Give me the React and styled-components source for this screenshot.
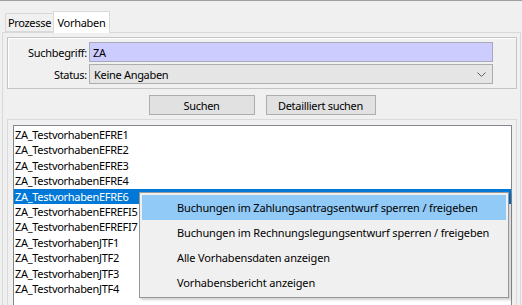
import React from "react";
import styled, { createGlobalStyle } from "styled-components";

const GlobalStyle = createGlobalStyle`
  html, body {
    margin: 0;
    padding: 0;
    background: #f0f0f0;
  }
  body {
    font-family: "Noto Sans", "Liberation Sans", sans-serif;
    font-size: 11px;
    letter-spacing: -0.3px;
    color: #000;
  }
`;

const Window = styled.div`
  position: relative;
  width: 522px;
  height: 305px;
  overflow: hidden;
  box-sizing: border-box;
  border-top: 1px solid #a0a0a0;
  background: #f0f0f0;
`;

const TabStrip = styled.div`
  position: relative;
  z-index: 1;
  display: flex;
  align-items: flex-end;
  height: 31px;
  padding-left: 5px;
`;

const Tab = styled.div`
  box-sizing: border-box;
  display: flex;
  align-items: center;
  justify-content: center;
  width: ${(p) => p.$width}px;
  height: ${(p) => (p.$active ? "22px" : "19px")};
  margin-bottom: ${(p) => (p.$active ? "-1px" : "0")};
  border: 1px solid #d9d9d9;
  border-bottom: ${(p) => (p.$active ? "none" : "1px solid #d9d9d9")};
  border-right: ${(p) => (p.$active ? "1px solid #d9d9d9" : "none")};
  background: ${(p) => (p.$active ? "#fff" : "#f0f0f0")};
`;

const TabPanel = styled.div`
  box-sizing: border-box;
  height: 290px;
  margin: 0 1px 0 2px;
  padding: 4px 3px 0 4px;
  border: 1px solid #d9d9d9;
`;

const GroupBox = styled.div`
  display: flex;
  flex-direction: column;
  gap: 2px;
  padding: 4px 23px 4px 0;
  border: 1px solid #c4c4c4;
  box-shadow: inset 1px 1px 0 #fff;
`;

const FieldRow = styled.div`
  display: flex;
  align-items: center;
  gap: 2px;
`;

const Label = styled.div`
  width: 79px;
  text-align: right;
`;

const TextField = styled.div`
  box-sizing: border-box;
  flex: 1;
  height: 20px;
  padding-left: 3px;
  display: flex;
  align-items: center;
  border: 1px solid #a8a8b8;
  background: #ccccff;
`;

const Combo = styled.div`
  box-sizing: border-box;
  flex: 1;
  height: 20px;
  padding: 0 6px 0 4px;
  display: flex;
  align-items: center;
  justify-content: space-between;
  border: 1px solid #adadad;
  background: #e5e5e5;
`;

const ButtonRow = styled.div`
  display: flex;
  justify-content: center;
  gap: 11px;
  margin: 6px 0 4px;
`;

const Button = styled.div`
  box-sizing: border-box;
  width: ${(p) => p.$width}px;
  height: 20px;
  display: flex;
  align-items: center;
  justify-content: center;
  border: 1px solid #adadad;
  background: #e1e1e1;
`;

const ListFrame = styled.div`
  box-sizing: border-box;
  height: 200px;
  padding: 5px 4px 0 5px;
  border: 1px solid #dadada;
  border-bottom: none;
`;

const ListBox = styled.div`
  box-sizing: border-box;
  height: 100%;
  padding-top: 1px;
  border: 1px solid #828790;
  border-bottom: none;
  background: #fff;
`;

const ListItem = styled.div`
  height: 15.4px;
  line-height: 15.4px;
  padding-left: 1px;
  white-space: nowrap;
  background: ${(p) => (p.$selected ? "#0078d7" : "transparent")};
  color: ${(p) => (p.$selected ? "#fff" : "#000")};
`;

const ContextMenu = styled.div`
  position: absolute;
  left: 139px;
  top: 191px;
  box-sizing: border-box;
  width: 370px;
  padding: 2px;
  border: 1px solid #979797;
  background: #f0f0f0;
  box-shadow: 2px 2px 2px rgba(0, 0, 0, 0.18);
  letter-spacing: -0.15px;
  z-index: 5;
`;

const MenuItem = styled.div`
  height: 25px;
  display: flex;
  align-items: center;
  padding-left: 35px;
  white-space: nowrap;
  background: ${(p) => (p.$hover ? "#91c9f7" : "transparent")};
`;

const Chevron = () => (
  <svg width="9" height="5" viewBox="0 0 9 5">
    <path d="M0.5 0.5 L4.5 4.5 L8.5 0.5" fill="none" stroke="#606060" strokeWidth="1" />
  </svg>
);

const items = [
  "ZA_TestvorhabenEFRE1",
  "ZA_TestvorhabenEFRE2",
  "ZA_TestvorhabenEFRE3",
  "ZA_TestvorhabenEFRE4",
  "ZA_TestvorhabenEFRE6",
  "ZA_TestvorhabenEFREFI5",
  "ZA_TestvorhabenEFREFI7",
  "ZA_TestvorhabenJTF1",
  "ZA_TestvorhabenJTF2",
  "ZA_TestvorhabenJTF3",
  "ZA_TestvorhabenJTF4",
];

const menu = [
  "Buchungen im Zahlungsantragsentwurf sperren / freigeben",
  "Buchungen im Rechnungslegungsentwurf sperren / freigeben",
  "Alle Vorhabensdaten anzeigen",
  "Vorhabensbericht anzeigen",
];

export default function App() {
  return (
    <>
      <GlobalStyle />
      <Window>
        <TabStrip>
          <Tab $width={48}>Prozesse</Tab>
          <Tab $width={57} $active>
            Vorhaben
          </Tab>
        </TabStrip>
        <TabPanel>
          <GroupBox>
            <FieldRow>
              <Label>Suchbegriff:</Label>
              <TextField>ZA</TextField>
            </FieldRow>
            <FieldRow>
              <Label>Status:</Label>
              <Combo>
                Keine Angaben
                <Chevron />
              </Combo>
            </FieldRow>
          </GroupBox>
          <ButtonRow>
            <Button $width={106}>Suchen</Button>
            <Button $width={110}>Detailliert suchen</Button>
          </ButtonRow>
          <ListFrame>
            <ListBox>
              {items.map((it, i) => (
                <ListItem key={it} $selected={i === 4}>
                  {it}
                </ListItem>
              ))}
            </ListBox>
          </ListFrame>
        </TabPanel>
        <ContextMenu>
          {menu.map((m, i) => (
            <MenuItem key={m} $hover={i === 0}>
              {m}
            </MenuItem>
          ))}
        </ContextMenu>
      </Window>
    </>
  );
}
